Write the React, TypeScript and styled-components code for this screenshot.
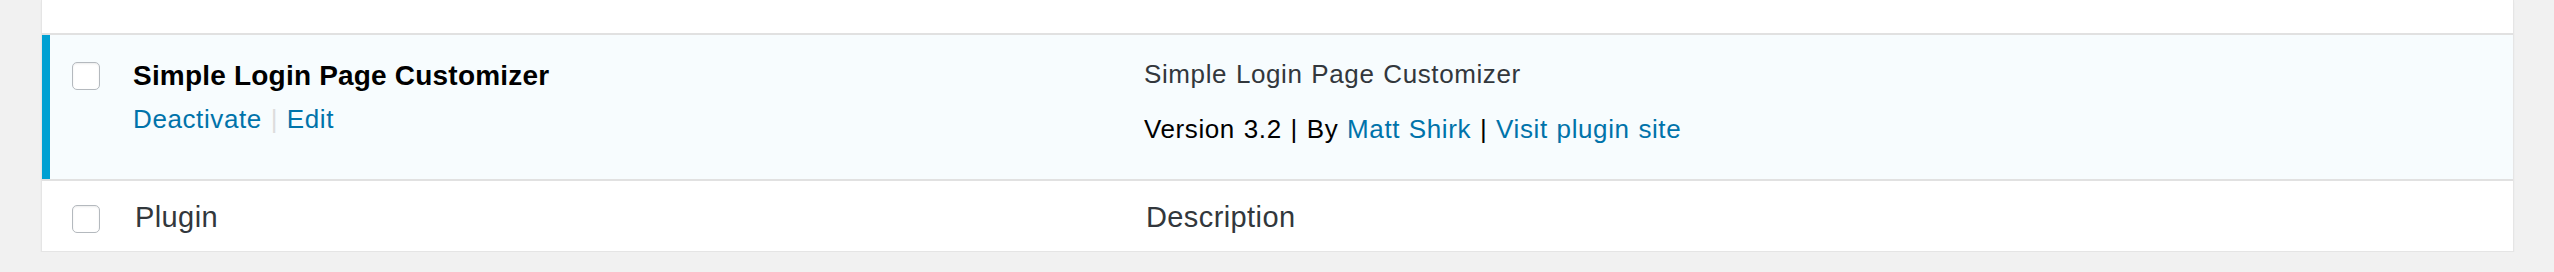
import React from "react";
import styled, { createGlobalStyle } from "styled-components";

const GlobalStyle = createGlobalStyle`
  html, body {
    margin: 0;
    padding: 0;
    background: #f1f1f1;
  }
  body {
    font-family: "Liberation Sans", Arial, sans-serif;
    color: #32373c;
  }
`;

const Panel = styled.div`
  margin: 0 40px 0 41px;
  background: #ffffff;
  border: 1px solid #e5e5e5;
  border-top: none;
  box-shadow: 0 2px 2px rgba(0, 0, 0, 0.04);
`;

const Row = styled.div<{ $active?: boolean; $height: number; $divider?: boolean }>`
  display: grid;
  grid-template-columns: 91px 1011px 1fr;
  height: ${(p) => p.$height}px;
  box-sizing: border-box;
  background: ${(p) => (p.$active ? "#f7fcfe" : "#ffffff")};
  border-bottom: ${(p) => (p.$divider ? "2px solid #e1e1e1" : "none")};
`;

const CheckCell = styled.div<{ $active?: boolean; $top: number }>`
  box-sizing: border-box;
  border-left: ${(p) => (p.$active ? "8px solid #00a0d2" : "none")};
  padding-left: ${(p) => (p.$active ? 22 : 30)}px;
  padding-top: ${(p) => p.$top}px;
`;

const Checkbox = styled.span`
  display: block;
  width: 28px;
  height: 28px;
  box-sizing: border-box;
  border: 1px solid #b4b9be;
  border-radius: 5px;
  background: #ffffff;
  box-shadow: inset 0 1px 2px rgba(0, 0, 0, 0.08);
`;

const NameCell = styled.div<{ $top: number; $shift?: number }>`
  box-sizing: border-box;
  padding-top: ${(p) => p.$top}px;
  padding-left: ${(p) => p.$shift ?? 0}px;
  display: flex;
  flex-direction: column;
`;

const PluginTitle = styled.strong`
  font-size: 28px;
  line-height: 40px;
  font-weight: 700;
  letter-spacing: 0.2px;
  color: #000000;
`;

const Actions = styled.div`
  margin-top: 5px;
  font-size: 26px;
  line-height: 36px;
  letter-spacing: 0.6px;
  word-spacing: 1px;
  color: #ddd;
`;

const Link = styled.a`
  color: #0073aa;
  text-decoration: none;
`;

const Sep = styled.span`
  color: #dddddd;
`;

const DescCell = styled.div<{ $top: number; $shift?: number }>`
  box-sizing: border-box;
  padding-top: ${(p) => p.$top}px;
  padding-left: ${(p) => p.$shift ?? 0}px;
  font-size: 26px;
  line-height: 36px;
  letter-spacing: 0.6px;
  word-spacing: 1px;
`;

const DescText = styled.p`
  margin: 0;
  color: #32373c;
`;

const VersionLine = styled.div`
  margin-top: 19px;
  color: #000000;
`;

const HeaderLabel = styled.span`
  font-size: 29px;
  line-height: 40px;
  letter-spacing: 0.4px;
  word-spacing: 0;
  color: #32373c;
`;

export default function App() {
  return (
    <>
      <GlobalStyle />
      <Panel>
        <Row $height={35} $divider>
          <div />
          <div />
          <div />
        </Row>
        <Row $active $height={146} $divider>
          <CheckCell $active $top={27}>
            <Checkbox />
          </CheckCell>
          <NameCell $top={21}>
            <PluginTitle>Simple Login Page Customizer</PluginTitle>
            <Actions>
              <Link href="#">Deactivate</Link> <Sep>|</Sep>{" "}
              <Link href="#">Edit</Link>
            </Actions>
          </NameCell>
          <DescCell $top={21}>
            <DescText>Simple Login Page Customizer</DescText>
            <VersionLine>
              Version 3.2 | By <Link href="#">Matt Shirk</Link> |{" "}
              <Link href="#">Visit plugin site</Link>
            </VersionLine>
          </DescCell>
        </Row>
        <Row $height={70}>
          <CheckCell $top={24}>
            <Checkbox />
          </CheckCell>
          <NameCell $top={16} $shift={2}>
            <HeaderLabel>Plugin</HeaderLabel>
          </NameCell>
          <DescCell $top={16} $shift={2}>
            <HeaderLabel>Description</HeaderLabel>
          </DescCell>
        </Row>
      </Panel>
    </>
  );
}
